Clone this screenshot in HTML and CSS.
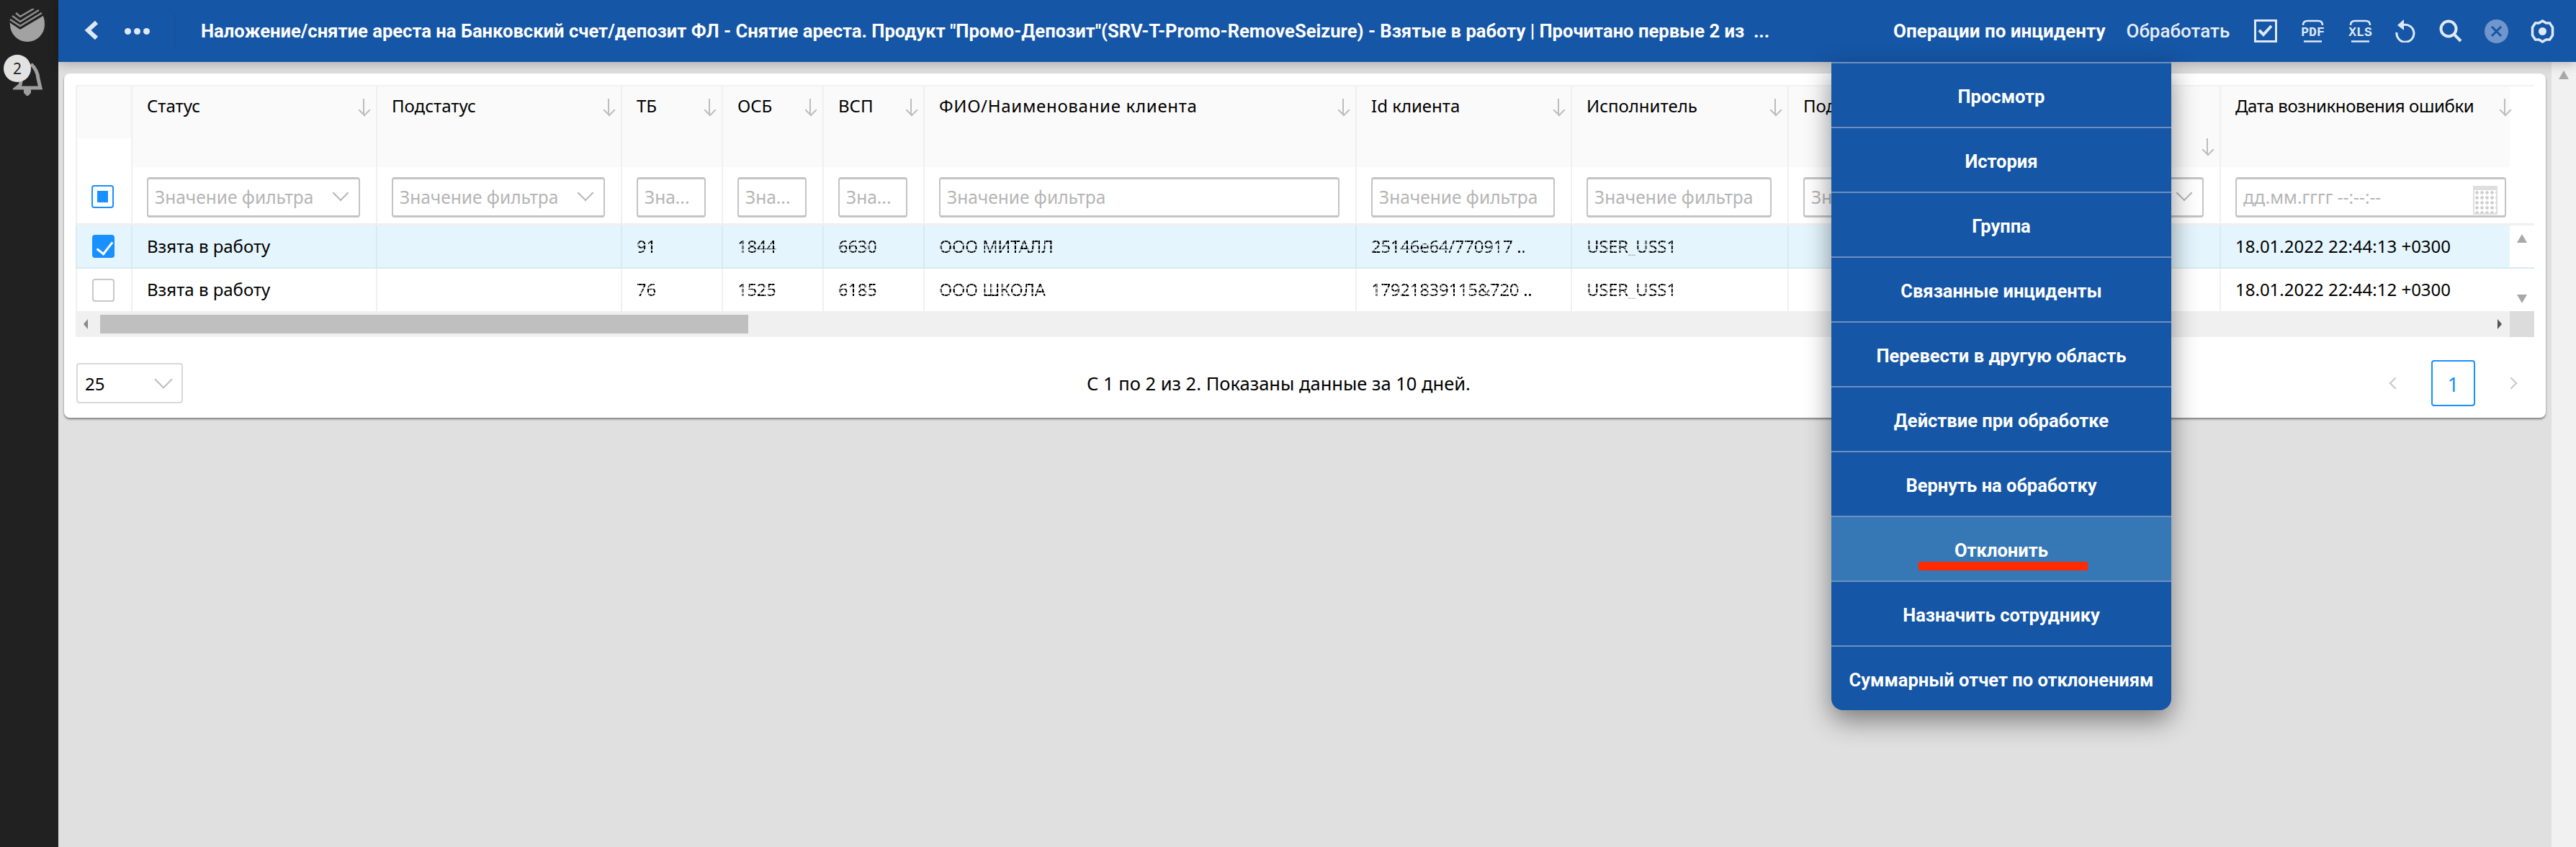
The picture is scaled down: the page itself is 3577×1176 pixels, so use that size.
FILE: index.html
```html
<!DOCTYPE html>
<html lang="ru">
<head>
<meta charset="utf-8">
<title>Инциденты</title>
<link rel="stylesheet" href="styles.css">
</head>
<body>
<aside class="rail">
  <svg class="logo" viewBox="0 0 50 48" width="50" height="48"><path d="M0 19l15 10L47 10q2 5 2 12A24 24 0 0 1 1 22q0-2-1-3z" fill="#a2a2a2"/><path d="M1 15l14 9L45 6M4 10l11 8L41 2M9 6l6 5L34 0" fill="none" stroke="#8f8f8f" stroke-width="2.5"/></svg>
  <div class="bell">
    <svg viewBox="0 0 44 48" width="44" height="48"><path d="M25 4q9 8 10 20l3 13H5l5-4q2-10 4-18" fill="none" stroke="#9e9e9e" stroke-width="5"/><path d="M15 39h10v5l-4 4h-2l-4-4z" fill="#9e9e9e"/></svg>
    <span class="badge">2</span>
  </div>
</aside>
<div class="main">
  <header class="topbar">
    <svg class="back" viewBox="0 0 20 28" width="20" height="28"><path d="M17 3L5 14l12 11" fill="none" stroke="#dfe8f5" stroke-width="6"/></svg>
    <div class="dots"><i></i><i></i><i></i></div>
    <div class="sep"></div>
    <div class="title">Наложение/снятие ареста на Банковский счет/депозит ФЛ - Снятие ареста. Продукт "Промо-Депозит"(SRV-T-Promo-RemoveSeizure) - Взятые в работу | Прочитано первые 2 из &nbsp;...</div>
    <div class="actions">
      <span class="act act-a">Операции по инциденту</span>
      <span class="act act-b">Обработать</span>
      <svg class="ico i1" viewBox="0 0 32 32" width="32" height="32"><rect x="1.500" y="1.500" width="29" height="29" fill="none" stroke="#dfe8f5" stroke-width="3"/><path d="M7 15l6 6L24 9" fill="none" stroke="#dfe8f5" stroke-width="4"/></svg>
      <svg class="ico i2" viewBox="0 0 33 32" width="33" height="32"><path d="M3 8q0-6 6-6h15q6 0 6 6M4 30.500h25" fill="none" stroke="#dfe8f5" stroke-width="2.500"/><text class="ftxt" x="16.500" y="23" text-anchor="middle">PDF</text></svg>
      <svg class="ico i3" viewBox="0 0 33 32" width="33" height="32"><path d="M3 8q0-6 6-6h15q6 0 6 6M4 30.500h25" fill="none" stroke="#dfe8f5" stroke-width="2.500"/><text class="ftxt" x="16.500" y="23" text-anchor="middle">XLS</text></svg>
      <svg class="ico i4" viewBox="0 0 28 32" width="28" height="32"><path d="M10 8a12 12 0 1 1-8 10" fill="none" stroke="#dfe8f5" stroke-width="3"/><path d="M12 0v15L3 8z" fill="#dfe8f5"/></svg>
      <svg class="ico i5" viewBox="0 0 32 32" width="32" height="32"><circle cx="13" cy="13" r="10.500" fill="none" stroke="#dfe8f5" stroke-width="4"/><path d="M20 20l10 10" stroke="#dfe8f5" stroke-width="4"/></svg>
      <svg class="ico i6" viewBox="0 0 33 33" width="33" height="33"><circle cx="16.500" cy="16.500" r="16.500" fill="#7096cb"/><path d="M10 10l13 13M23 10L10 23" stroke="#1556a6" stroke-width="3"/></svg>
      <svg class="ico i7" viewBox="0 0 33 33" width="33" height="33"><path d="M16.500 2l5 3h5l4 6v11l-4 6h-5l-5 3-5-3h-5l-4-6V11l4-6h5z" fill="none" stroke="#dfe8f5" stroke-width="3.500"/><circle cx="16.500" cy="16.500" r="5.500" fill="#dfe8f5"/></svg>
    </div>
  </header>
  <div class="content">
    <main class="page">
      <section class="card">
        <div class="grid">
          <div class="row head">
            <div class="cell c-check"></div>
            <div class="cell"><span>Статус</span><b class="sort"></b></div>
            <div class="cell"><span>Подстатус</span><b class="sort"></b></div>
            <div class="cell"><span>ТБ</span><b class="sort"></b></div>
            <div class="cell"><span>ОСБ</span><b class="sort"></b></div>
            <div class="cell"><span>ВСП</span><b class="sort"></b></div>
            <div class="cell"><span class="wide-t">ФИО/Наименование клиента</span><b class="sort"></b></div>
            <div class="cell"><span>Id клиента</span><b class="sort"></b></div>
            <div class="cell"><span>Исполнитель</span><b class="sort"></b></div>
            <div class="cell"><span>Подразделение</span><b class="sort"></b></div>
            <div class="cell"><b class="sort low"></b></div>
            <div class="cell"><span class="nw tight-t">Дата возникновения ошибки</span><b class="sort tight"></b></div>
            <div class="blank"></div>
          </div>
          <div class="row filters">
            <div class="cell c-box"><span class="box ind"></span></div>
            <div class="cell"><div class="inp sel">Значение фильтра</div></div>
            <div class="cell"><div class="inp sel">Значение фильтра</div></div>
            <div class="cell"><div class="inp">Зна...</div></div>
            <div class="cell"><div class="inp">Зна...</div></div>
            <div class="cell"><div class="inp">Зна...</div></div>
            <div class="cell"><div class="inp">Значение фильтра</div></div>
            <div class="cell"><div class="inp">Значение фильтра</div></div>
            <div class="cell"><div class="inp">Значение фильтра</div></div>
            <div class="cell"><div class="inp">Значение фильтра</div></div>
            <div class="cell"><div class="inp sel"></div></div>
            <div class="cell c-date"><div class="inp cal">дд.мм.гггг --:--:--</div></div>
            <div class="blank"></div>
          </div>
          <div class="row data on">
            <div class="cell c-box"><span class="box checked"></span></div>
            <div class="cell">Взята в работу</div>
            <div class="cell"></div>
            <div class="cell"><span class="smudge">91</span></div>
            <div class="cell"><span class="smudge">1844</span></div>
            <div class="cell"><span class="smudge">6630</span></div>
            <div class="cell"><span class="smudge">ООО МИТАЛЛ</span></div>
            <div class="cell"><span class="smudge">25146e64/770917 ..</span></div>
            <div class="cell"><span class="smudge">USER_USS1</span></div>
            <div class="cell"></div>
            <div class="cell"></div>
            <div class="cell">18.01.2022 22:44:13 +0300</div>
            <div class="vbar"><i class="tri up"></i></div>
          </div>
          <div class="row data">
            <div class="cell c-box"><span class="box"></span></div>
            <div class="cell">Взята в работу</div>
            <div class="cell"></div>
            <div class="cell"><span class="smudge">76</span></div>
            <div class="cell"><span class="smudge">1525</span></div>
            <div class="cell"><span class="smudge">6185</span></div>
            <div class="cell"><span class="smudge">ООО ШКОЛА</span></div>
            <div class="cell"><span class="smudge">17921839115&amp;720 ..</span></div>
            <div class="cell"><span class="smudge">USER_USS1</span></div>
            <div class="cell"></div>
            <div class="cell"></div>
            <div class="cell">18.01.2022 22:44:12 +0300</div>
            <div class="vbar"><i class="tri down"></i></div>
          </div>
          <div class="hscroll">
            <i class="tri left"></i>
            <div class="thumb"></div>
            <i class="tri right"></i>
            <div class="corner"></div>
          </div>
        </div>
        <footer class="foot">
          <div class="size">25</div>
          <div class="info">С 1 по 2 из 2. Показаны данные за 10 дней.</div>
          <nav class="pager"><i class="pg-arrow prev"></i><span class="pg-cur">1</span><i class="pg-arrow next"></i></nav>
        </footer>
      </section>
    </main>
    <div class="pagebar"><i class="tri up"></i></div>
  </div>
  <ul class="menu">
    <li>Просмотр</li>
    <li>История</li>
    <li>Группа</li>
    <li>Связанные инциденты</li>
    <li>Перевести в другую область</li>
    <li>Действие при обработке</li>
    <li>Вернуть на обработку</li>
    <li class="hot">Отклонить<span class="mark"></span></li>
    <li>Назначить сотруднику</li>
    <li>Суммарный отчет по отклонениям</li>
  </ul>
</div>
</body>
</html>
```

FILE: styles.css
```css
* { box-sizing: border-box; }
html, body { height: 100%; margin: 0; }
body {
  display: flex;
  overflow: hidden;
  background: #e0e0e0;
  color: #000;
  font: 24px/32px "Noto Sans", sans-serif;
}
.rail {
  flex: 0 0 81px;
  background: #212121;
  display: flex;
  flex-direction: column;
  padding: 12px 0 0 13px;
}
.logo { display: block; }
.bell { position: relative; width: 44px; height: 48px; margin-top: 25px; margin-left: 5px; }
.bell svg { display: block; }
.badge {
  position: absolute;
  left: -13px;
  top: -9px;
  width: 38px;
  height: 38px;
  border-radius: 50%;
  background: #e2e2e2;
  color: #222;
  font-size: 21px;
  line-height: 38px;
  text-align: center;
}
.main { flex: 1; min-width: 0; display: flex; flex-direction: column; position: relative; }
.topbar {
  flex: 0 0 86px;
  background: #1556a6;
  display: flex;
  align-items: center;
  color: #fff;
  box-shadow: 0 4px 14px rgba(0,0,0,.22);
  position: relative;
  z-index: 2;
}
.back { margin-left: 36px; margin-top: -2px; }
.dots { display: flex; gap: 4px; margin-left: 36px; }
.dots i { width: 9px; height: 9px; border-radius: 50%; background: #dfe8f5; }
.sep { width: 1px; height: 48px; background: #174d92; margin-left: 34px; }
.title {
  margin-left: 36px;
  width: 2350px;
  flex: none;
  font: 700 25.6px/32px "Roboto", sans-serif;
  white-space: nowrap;
  overflow: hidden;
}
.actions { flex: 1; display: flex; align-items: center; font: 700 26px/32px "Roboto", sans-serif; }
.act { flex: none; white-space: nowrap; }
.act-b { margin-left: 29px; font-weight: 500; color: #e6edf7; }
.ico { flex: none; margin-left: 33px; }
.i1 { margin-left: 34px; }
.i4 { margin-left: 32px; }
.i6, .i7 { margin-left: 31px; }
.ftxt { font: 700 18px "Liberation Mono", monospace; fill: #dfe8f5; }
.content { flex: 1; display: flex; min-height: 0; }
.page { flex: 1; min-width: 0; padding: 16px 8px 0 8px; }
.pagebar { flex: 0 0 34px; background: #f1f1f1; padding-top: 12px; display: flex; justify-content: center; }
.card {
  background: #fff;
  border-radius: 8px;
  padding: 16px 16px 0;
  height: 478px;
  box-shadow: 0 2px 3px rgba(0,0,0,.45);
}
.row {
  display: grid;
  grid-template-columns: 77px 340px 340px 140px 140px 140px 600px 299px 301px 300px 300px 403px 34px;
}
.cell { border-left: 2px solid #f0f0f0; padding: 0 20px; min-width: 0; white-space: nowrap; }
.cell:first-child { border-left: 2px solid #f0f0f0; padding: 0; }
.head { height: 114px; border-top: 2px solid #f2f2f2; }
.head .cell { background: #fafafa; position: relative; padding-top: 11px; white-space: normal; }
.head .c-check { background: linear-gradient(#fafafa 72px, #fff 72px); }
.head .nw { white-space: nowrap; }
.tight-t { letter-spacing: -.4px; }
.wide-t { letter-spacing: .7px; }
.sort {
  position: absolute;
  right: 10px;
  top: 17px;
  width: 14px;
  height: 24px;
  background: linear-gradient(#bdbdbd, #bdbdbd) 6px 0 / 2px 23px no-repeat;
}
.sort::after {
  content: "";
  position: absolute;
  left: 2px;
  bottom: 2px;
  width: 10px;
  height: 10px;
  border-right: 2px solid #bdbdbd;
  border-bottom: 2px solid #bdbdbd;
  transform: rotate(45deg);
}
.sort.low { top: 72px; }
.sort.tight { right: 0; }
.filters { height: 81px; border-bottom: 3px solid #f0f0f0; }
.filters .cell { padding-top: 14px; padding-left: 20px; padding-right: 22px; }
.filters .c-date { padding-right: 5px; }
.c-box { display: flex; justify-content: center; align-items: center; }
.filters .c-box { padding: 3px 4px 0 0; }
.inp {
  height: 56px;
  border: 2px solid #c4c4c4;
  border-top-width: 3px;
  border-bottom-width: 3px;
  border-radius: 4px;
  color: #b5b5b5;
  font-size: 24.500px;
  line-height: 50px;
  padding-left: 9px;
  overflow: hidden;
  background: #fff;
  position: relative;
}
.sel::after {
  content: "";
  position: absolute;
  right: 17px;
  top: 11px;
  width: 14px;
  height: 14px;
  border-right: 2px solid #b5b5b5;
  border-bottom: 2px solid #b5b5b5;
  transform: rotate(45deg);
}
.cal::after {
  content: "";
  position: absolute;
  right: 10px;
  top: 9px;
  width: 30px;
  height: 32px;
  border: 2px solid #dedede;
  border-top-width: 6px;
  background: radial-gradient(circle, #cfcfcf 2px, #fff 2.5px) 0 0 / 7px 7px;
}
.box {
  display: block;
  width: 31px;
  height: 32px;
  border: 2px solid #c8c8c8;
  border-radius: 4px;
  background: #fff;
  position: relative;
}
.box.ind { border-color: #1890ff; }
.box.ind::after { content: ""; position: absolute; inset: 6px; background: #1890ff; }
.box.checked { background: #1890ff; border-color: #1890ff; }
.box.checked::after {
  content: "";
  position: absolute;
  left: 9px;
  top: 3px;
  width: 10px;
  height: 19px;
  border-right: 3px solid #fff;
  border-bottom: 3px solid #fff;
  transform: rotate(38deg);
}
.data { height: 59px; line-height: 58px; font-size: 24px; }
.data .cell { display: block; }
.data .c-box { display: flex; padding: 0 2px 0 0; }
.data.on { height: 60px; border-bottom: 2px solid #d9e9f2; }
.data.on .cell { background: #e4f5fd; border-left-color: #dbe9f0; }
.smudge {
  display: inline-block;
  letter-spacing: -.3px;
  -webkit-mask-image:
    repeating-linear-gradient(90deg, #000 0 2px, rgba(0,0,0,.45) 2px 3px, #000 3px 5px),
    repeating-linear-gradient(#000 0 5px, rgba(0,0,0,.2) 5px 7px);
  -webkit-mask-composite: source-in;
  mask-composite: intersect;
}
.vbar { position: relative; height: 100%; background: #fff; }
.tri { display: block; width: 0; height: 0; border-style: solid; border-color: transparent; }
.tri.up { border-width: 0 7px 12px; border-bottom-color: #a8a8a8; }
.tri.down { border-width: 12px 7px 0; border-top-color: #a8a8a8; }
.tri.left { border-width: 7px 6px 7px 0; border-right-color: #8a8a8a; }
.tri.right { border-width: 7px 0 7px 6px; border-left-color: #555; }
.vbar .tri { margin: 12px auto 0; }
.vbar .tri.down { margin-top: 36px; }
.hscroll { height: 36px; background: #f0f0f0; display: flex; align-items: center; padding-left: 11px; }
.thumb { width: 900px; height: 26px; background: #bfbfbf; margin-left: 17px; }
.hscroll .right { margin-left: 2429px; }
.corner { width: 34px; height: 36px; background: #dcdcdc; margin-left: 11px; }
.foot { display: flex; align-items: center; position: relative; margin-top: 36px; height: 56px; }
.size {
  width: 148px;
  height: 56px;
  margin-left: 1px;
  border: 2px solid #d9d9d9;
  border-radius: 4px;
  padding-left: 10px;
  font-size: 24px;
  line-height: 54px;
  position: relative;
}
.size::after {
  content: "";
  position: absolute;
  right: 16px;
  top: 12px;
  width: 16px;
  height: 16px;
  border-right: 2px solid #bdbdbd;
  border-bottom: 2px solid #bdbdbd;
  transform: rotate(45deg);
}
.info { flex: 1; text-align: center; padding-right: 23px; font-size: 25.500px; }
.pager { display: flex; align-items: center; gap: 44px; padding-right: 26px; }
.pg-cur {
  width: 61px;
  height: 64px;
  border: 2px solid #1890ff;
  border-radius: 4px;
  color: #1890ff;
  text-align: center;
  line-height: 62px;
  font-size: 28px;
}
.pg-arrow { display: block; width: 12px; height: 12px; border-left: 2px solid #c8c8c8; border-bottom: 2px solid #c8c8c8; }
.prev { transform: rotate(45deg); }
.next { transform: rotate(225deg); }
.menu {
  position: absolute;
  left: 2462px;
  top: 86px;
  width: 472px;
  height: 900px;
  margin: 0;
  padding: 0;
  list-style: none;
  background: #1556a6;
  color: #fff;
  border-radius: 0 0 16px 16px;
  box-shadow: 0 14px 36px rgba(0,0,0,.45);
  font: 700 25.500px/32px "Roboto", sans-serif;
  text-align: center;
  z-index: 3;
}
.menu li {
  height: 90px;
  border-top: 2px solid #6d8fc0;
  padding-top: 30px;
  position: relative;
}
.menu .hot { background: #3578b5; }
.mark {
  position: absolute;
  left: 121px;
  top: 62px;
  width: 235px;
  height: 12px;
  background: #ff2a00;
}
```
